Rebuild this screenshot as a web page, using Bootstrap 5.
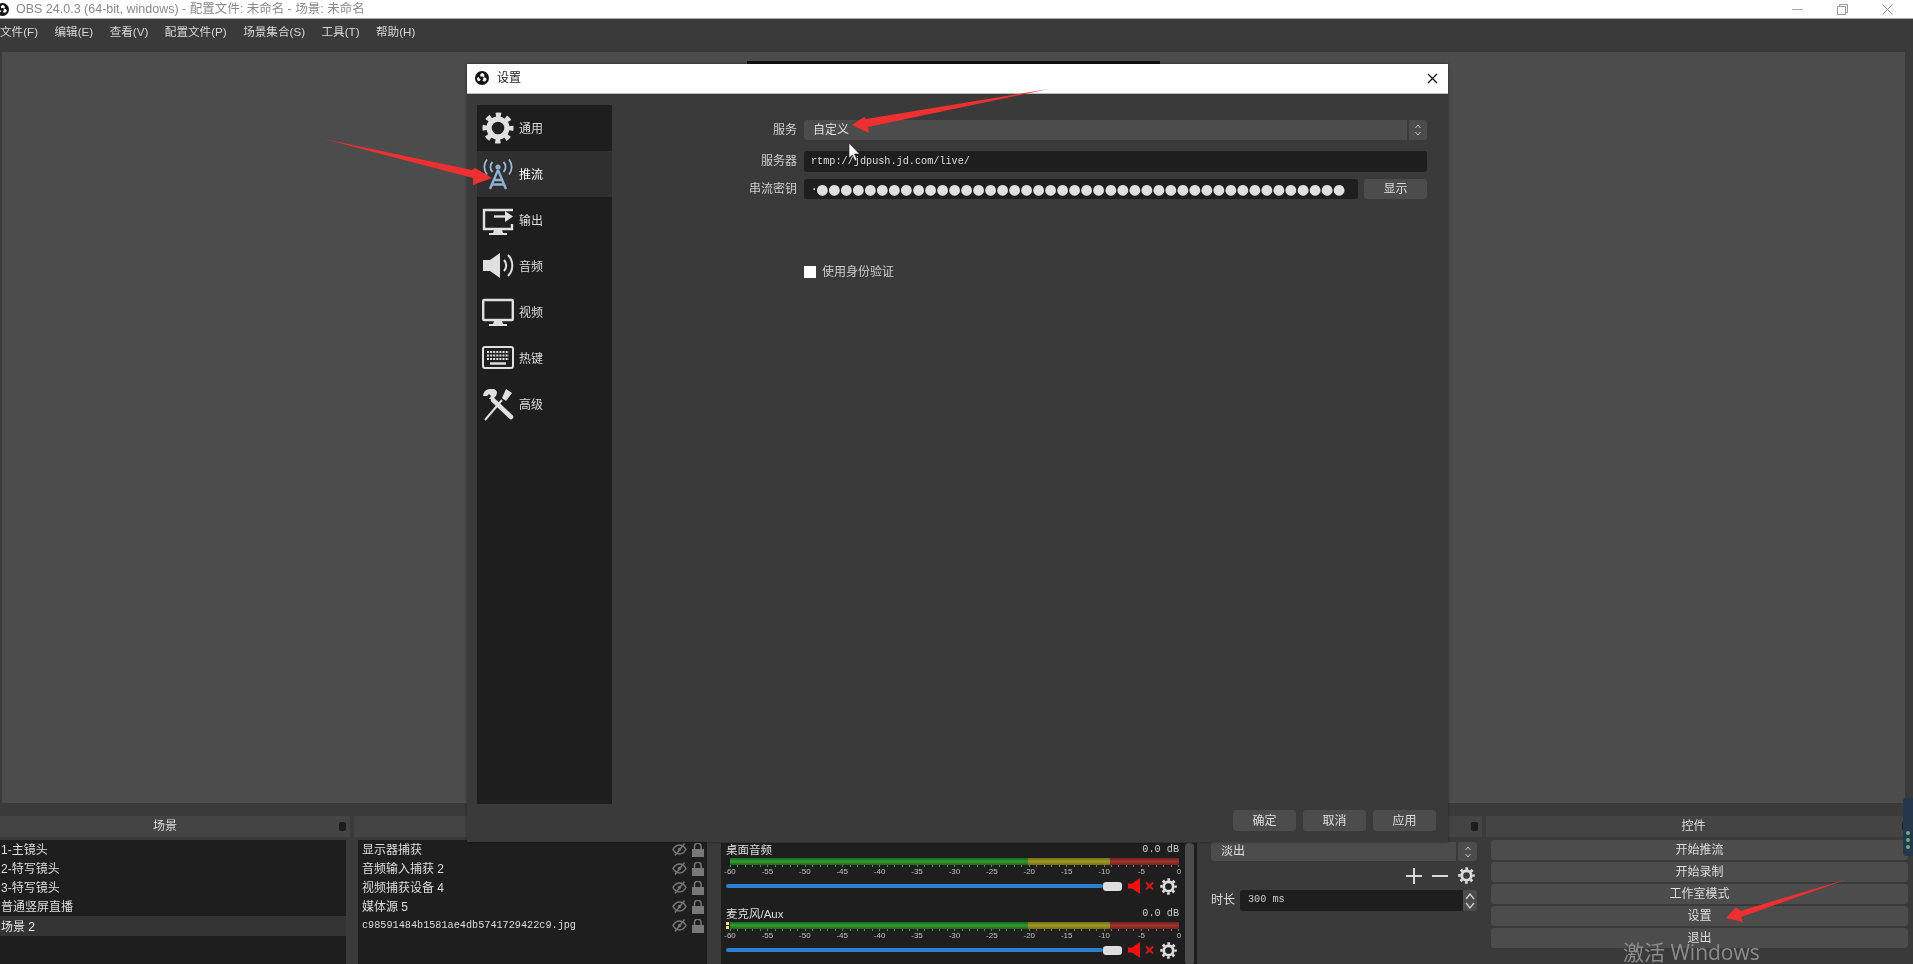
<!doctype html>
<html lang="zh">
<head>
<meta charset="utf-8">
<title>OBS</title>
<link rel="stylesheet" href="https://cdn.jsdelivr.net/npm/bootstrap@5.3.0/dist/css/bootstrap.min.css">
<style>
html,body{height:100%;margin:0;overflow:hidden;background:#3a3a3a}
body{font-family:"Liberation Sans","Noto Sans CJK SC",sans-serif;font-size:12px;color:#dedede;line-height:1.2}
.appfilm{width:1913px;height:964px;position:relative;overflow:hidden;background:#3a3a3a;filter:blur(.55px)}
.wintitle{height:19px;background:#fff;color:#8a8a8a;font-size:12.5px;border-bottom:1px solid #aaa;padding-top:1px}
.winlogo{margin-left:-4px;margin-right:7px}
.winctl{gap:34px;padding-right:20px}
.menustrip{height:33px;gap:16.500px;padding:0 0 7px 0;font-size:11.600px;color:#d8d8d8}
.previewpane{height:751px;margin:0 8px 0 2px;background:#4c4c4c;padding-top:9px}
.previewstrip{width:413px;height:3px;margin-left:745px;background:#111}
.dockrow{height:149px;padding-top:12px}
.docktitle{height:21px;margin-top:1px;background:#444;color:#dedede;position:relative}
.floatmark{position:absolute;right:4px;top:6px;width:7px;height:9px;border-radius:2px;background:#1c1c1c}
.dockscene{width:350px;margin-right:4px}
.dockscene .docktitle{padding-right:20px}
.docksource{width:358px;margin-right:4px}
.dockmixer{width:481px;margin-right:6px}
.docktrans{width:279px;margin-right:4px}
.dockctl{width:427px}
.dockctl .docktitle{padding-right:12px}
.listpane{background:#1e1e1e;margin-top:3px;height:125px;border-radius:0}
.scenelist{width:346px}
.sourcelist{width:349px;margin-left:4px}
.entry{height:19px;padding:2px 1px 0;background:transparent;border:0;color:#dedede;border-radius:0;white-space:nowrap}
.sourcelist .entry{padding:2px 2px 0 4px;gap:0}
.entry.picked{background:#333;height:20px;color:#e8e8e8}
.entryicons{gap:5px;padding-right:1px;margin-top:-2px}
.monotext{font-family:"Liberation Mono","Noto Sans CJK SC",monospace;font-size:10.200px}
.mixerpane{width:476px;margin-left:5px;height:122px;margin-top:6px;background:#1e1e1e;padding:0 3px 0 5px;position:relative}
.mixerbar{position:absolute;right:3px;top:0;width:9px;height:122px;background:#4c4c4c;border-radius:4px}
.channel{width:453px;height:63px}
.channel+.channel{padding-top:1px}
.chanhead{height:15px;font-size:11.500px}
.decibel{font-family:"Liberation Mono",monospace;font-size:10.200px;color:#cfcfcf}
.meterbar{height:7px;margin-left:4px;position:relative}
.mgreen{width:298px;background:linear-gradient(#1d651d,#2f9b2f 50%,#1d651d)}
.myellow{width:82px;background:linear-gradient(#6d6d1c,#a09a28 50%,#6d6d1c)}
.mred{width:69px;background:linear-gradient(#6f231c,#a0352a 50%,#6f231c)}
.peakmark{position:absolute;left:-4px;top:0;width:3px;height:7px;background:repeating-linear-gradient(#f2e27a 0 3px,#222 3px 4px)}
.tickstrip{height:2px;margin-left:4px;background:repeating-linear-gradient(90deg,#7a7a7a 0 1px,transparent 1px 7.470px)}
.scaletext{height:9px;margin-left:4px;font-size:8px;color:#c0c0c0;line-height:9px}
.scaletext span{width:0;display:flex;justify-content:center}
.sliderrow{height:20px}
.slidertrack{width:377px;height:4px;background:#2f7fd0;border-radius:2px}
.sliderknob{width:19px;height:9px;background:#dedede;border-radius:3px;margin-right:6px}
.obsbtn{--bs-btn-bg:#4c4c4c;--bs-btn-color:#dedede;--bs-btn-border-color:#4c4c4c;--bs-btn-hover-bg:#4c4c4c;--bs-btn-hover-color:#dedede;--bs-btn-hover-border-color:#4c4c4c;--bs-btn-padding-y:0;--bs-btn-padding-x:0;--bs-btn-font-size:12px;--bs-btn-border-radius:3px;--bs-btn-line-height:1;display:flex;align-items:center;justify-content:center}
.ctlstack{width:417px;margin:3px 0 0 5px;gap:2px}
.ctlstack .obsbtn{height:20px}
.transblock{padding:5px 5px 0 8px;height:125px}
.comboface{width:245px;height:19px;background:#4c4c4c;border-radius:3px 0 0 3px;padding-left:10px}
.combostep{width:19px;height:19px;margin-left:2px;background:#4c4c4c;border-radius:3px}
.transtools{gap:10px;margin:4px 2px 0 0;height:21px}
.spanlabel{width:29px;color:#dedede}
.spanfield{width:223px;height:21px;background:#1e1e1e;border-radius:3px 0 0 3px;padding-left:8px;color:#cfcfcf}
.spansteps{width:14px;height:21px;background:#4c4c4c;border-radius:0 3px 3px 0}
.durationrow{margin-top:4px}
.dialogwin{position:absolute;left:467px;top:64px;width:981px;height:778px;background:#3a3a3a;box-shadow:0 0 3px rgba(0,0,0,.45)}
.dialoghead{height:30px;background:#fff;color:#222;padding:0 10px 0 8px;border-bottom:1px solid #bbb}
.dialogmain{height:710px;padding:11px 0 0 10px}
.navrail{width:135px;height:699px;background:#1e1e1e;--bs-list-group-bg:transparent;--bs-list-group-border-width:0;--bs-list-group-color:#dedede;--bs-list-group-item-padding-x:5px;--bs-list-group-item-padding-y:0;border-radius:0}
.navrail .list-group-item{height:46px;gap:5px;display:flex;align-items:center;padding-right:0}
.navrail .list-group-item span{padding-top:2px}
.navrail .list-group-item.active{background:#2f2f2f;color:#fff;border:0;margin-top:0}
.navglyph{width:32px;height:34px;flex:none}
.formpane{width:836px;padding:15px 21px 0 0}
.formline{gap:7px}
.formlabel{width:185px;text-align:right;color:#d0d0d0}
.fieldslot{width:623px}
.selectface{height:20px;background:#4c4c4c;border-radius:3px;padding:0 0 0 9px;color:#dedede}
.selectstep{width:20px;height:20px;border-left:2px solid #3a3a3a}
.inputdark{background:#1e1e1e;border:0;border-radius:3px;color:#dedede;padding:0 7px}
.serverline{margin-top:11px;height:21px}
.serverline .inputdark{height:21px;line-height:21px}
.keyline{margin-top:7px;height:20px}
.keyface{width:554px;height:20px;background:#1e1e1e;border-radius:3px;overflow:hidden;white-space:nowrap;padding-left:8px;font-family:"DejaVu Sans",sans-serif;font-size:14px;letter-spacing:-.2px;line-height:20px;color:#e0e0e0}
.showbtn{width:63px;height:20px;margin-left:6px}
.authline{margin:61px 0 0 192px}
.authline .form-check-input{width:12px;height:12px;margin:0 6px 0 0;background:#fff;border:0;border-radius:0;float:none}
.authline .form-check-label{color:#cfcfcf}
.dialogfoot{gap:7px;padding:6px 12px 0 0}
.dialogfoot .obsbtn{width:63px;height:21px}
.pointerlayer{position:absolute;left:0;top:0;width:1913px;height:964px;pointer-events:none;z-index:5}
.watermark{position:absolute;left:1623px;top:940px;font-family:"Open Sans","Noto Sans CJK SC",sans-serif;font-size:21px;line-height:24px;color:#8c8c8c;white-space:nowrap;z-index:4}
.sidewidget{position:absolute;left:1903px;top:798px;width:10px;height:58px;background:#25384a;border-radius:3px 0 0 3px;padding:33px 0 0 3px;gap:3px}
.sidewidget i{width:4px;height:4px;border-radius:50%;background:#6fae8a}
</style>
</head>
<body>
<svg width="0" height="0" class="d-block position-absolute">
  <defs>
    <symbol id="gearglyph" viewBox="0 0 34 34">
      <circle cx="17" cy="17" r="9.500" fill="none" stroke="currentColor" stroke-width="5.600"/>
      <circle cx="17" cy="17" r="14" fill="none" stroke="currentColor" stroke-width="5" stroke-dasharray="5.500 5.496" stroke-dashoffset="2.750"/>
    </symbol>
    <symbol id="obslogo" viewBox="0 0 20 20">
      <circle cx="10" cy="10" r="10" fill="#111"/>
      <path d="M10 3a3.600 3.600 0 0 1 2.600 6 4 4 0 0 0-4.400-.8A3.600 3.600 0 0 1 10 3z" fill="#fff"/>
      <path d="M16.600 11.400a3.600 3.600 0 0 1-6 2.600 4 4 0 0 0 1-4.400 3.600 3.600 0 0 1 5 1.800z" fill="#fff"/>
      <path d="M4.600 14.600a3.600 3.600 0 0 1 .6-6.400 4 4 0 0 0 3 3.600 3.600 3.600 0 0 1-3.600 2.800z" fill="#fff"/>
    </symbol>
    <symbol id="eyeoff" viewBox="0 0 15 13">
      <path d="M1 6.500C3 3 5 2 7.500 2S12 3 14 6.500C12 10 10 11 7.500 11S3 10 1 6.500z" fill="none" stroke="#787878" stroke-width="1.500"/>
      <circle cx="7.500" cy="6.500" r="1.700" fill="#787878"/>
      <path d="M3 12.500 12.500.5" stroke="#787878" stroke-width="1.400"/>
    </symbol>
    <symbol id="lockopen" viewBox="0 0 12 14">
      <rect x="0" y="6" width="12" height="8" fill="#787878"/>
      <path d="M2.500 6V3.600a3.300 3.300 0 0 1 6.600 0V6" fill="none" stroke="#787878" stroke-width="1.500"/>
    </symbol>
    <symbol id="mutedspeaker" viewBox="0 0 28 16">
      <path d="M0 5.500h4L12 0v16L4 10.500H0z" fill="#f01010"/>
      <path d="M18 4.500l7 7m0-7-7 7" stroke="#d81818" stroke-width="2"/>
    </symbol>
    <symbol id="stepper" viewBox="0 0 10 20">
      <path d="M2.500 8 5 5l2.500 3M2.500 12 5 15l2.500-3" fill="none" stroke="#c4c4c4" stroke-width="1"/>
    </symbol>
  </defs>
</svg>

<div class="appfilm d-flex flex-column">
  <div class="wintitle d-flex align-items-center justify-content-between">
    <div class="d-flex align-items-center">
      <svg class="winlogo" width="13" height="13"><use href="#obslogo"/></svg>
      <span>OBS 24.0.3 (64-bit, windows) - 配置文件: 未命名 - 场景: 未命名</span>
    </div>
    <div class="winctl d-flex align-items-center">
      <svg width="11" height="11" viewBox="0 0 11 11"><path d="M0 5.500h11" stroke="#a8a8a8"/></svg>
      <svg width="11" height="11" viewBox="0 0 11 11"><path d="M.5 2.500h8v8h-8zM2.500 2.500V.5h8v8H8.500" fill="none" stroke="#999"/></svg>
      <svg width="11" height="11" viewBox="0 0 11 11"><path d="M.5.5l10 10m0-10-10 10" stroke="#888"/></svg>
    </div>
  </div>
  <div class="menustrip d-flex align-items-center">
    <span>文件(F)</span><span>编辑(E)</span><span>查看(V)</span><span>配置文件(P)</span><span>场景集合(S)</span><span>工具(T)</span><span>帮助(H)</span>
  </div>
  <div class="previewpane"><div class="previewstrip"></div></div>
  <div class="dockrow d-flex">
    <section class="dockscene">
      <div class="docktitle d-flex align-items-center justify-content-center"><span>场景</span><i class="floatmark"></i></div>
      <div class="listpane scenelist list-group">
        <div class="entry d-flex align-items-center">1-主镜头</div>
        <div class="entry d-flex align-items-center">2-特写镜头</div>
        <div class="entry d-flex align-items-center">3-特写镜头</div>
        <div class="entry d-flex align-items-center">普通竖屏直播</div>
        <div class="entry picked d-flex align-items-center">场景 2</div>
      </div>
    </section>
    <section class="docksource">
      <div class="docktitle"></div>
      <div class="listpane sourcelist list-group">
        <div class="entry d-flex align-items-center justify-content-between"><span>显示器捕获</span><span class="entryicons d-flex"><svg width="15" height="13"><use href="#eyeoff"/></svg><svg width="12" height="14"><use href="#lockopen"/></svg></span></div>
        <div class="entry d-flex align-items-center justify-content-between"><span>音频输入捕获 2</span><span class="entryicons d-flex"><svg width="15" height="13"><use href="#eyeoff"/></svg><svg width="12" height="14"><use href="#lockopen"/></svg></span></div>
        <div class="entry d-flex align-items-center justify-content-between"><span>视频捕获设备 4</span><span class="entryicons d-flex"><svg width="15" height="13"><use href="#eyeoff"/></svg><svg width="12" height="14"><use href="#lockopen"/></svg></span></div>
        <div class="entry d-flex align-items-center justify-content-between"><span>媒体源 5</span><span class="entryicons d-flex"><svg width="15" height="13"><use href="#eyeoff"/></svg><svg width="12" height="14"><use href="#lockopen"/></svg></span></div>
        <div class="entry d-flex align-items-center justify-content-between"><span class="monotext">c98591484b1581ae4db5741729422c9.jpg</span><span class="entryicons d-flex"><svg width="15" height="13"><use href="#eyeoff"/></svg><svg width="12" height="14"><use href="#lockopen"/></svg></span></div>
      </div>
    </section>
    <section class="dockmixer">
      <div class="docktitle"></div>
      <div class="mixerpane">
        <div class="channel">
          <div class="chanhead d-flex align-items-center justify-content-between"><span>桌面音频</span><span class="decibel">0.0 dB</span></div>
          <div class="meterbar d-flex"><i class="mgreen"></i><i class="myellow"></i><i class="mred"></i></div>
          <div class="tickstrip"></div>
          <div class="scaletext d-flex justify-content-between"><span>-60</span><span>-55</span><span>-50</span><span>-45</span><span>-40</span><span>-35</span><span>-30</span><span>-25</span><span>-20</span><span>-15</span><span>-10</span><span>-5</span><span>0</span></div>
          <div class="sliderrow d-flex align-items-center"><i class="slidertrack"></i><i class="sliderknob"></i><svg width="28" height="16"><use href="#mutedspeaker"/></svg><svg class="ms-1" width="17" height="17" color="#dcdcdc"><use href="#gearglyph"/></svg></div>
        </div>
        <div class="channel">
          <div class="chanhead d-flex align-items-center justify-content-between"><span>麦克风/Aux</span><span class="decibel">0.0 dB</span></div>
          <div class="meterbar d-flex"><i class="peakmark"></i><i class="mgreen"></i><i class="myellow"></i><i class="mred"></i></div>
          <div class="tickstrip"></div>
          <div class="scaletext d-flex justify-content-between"><span>-60</span><span>-55</span><span>-50</span><span>-45</span><span>-40</span><span>-35</span><span>-30</span><span>-25</span><span>-20</span><span>-15</span><span>-10</span><span>-5</span><span>0</span></div>
          <div class="sliderrow d-flex align-items-center"><i class="slidertrack"></i><i class="sliderknob"></i><svg width="28" height="16"><use href="#mutedspeaker"/></svg><svg class="ms-1" width="17" height="17" color="#dcdcdc"><use href="#gearglyph"/></svg></div>
        </div>
        <div class="mixerbar"></div>
      </div>
    </section>
    <section class="docktrans">
      <div class="docktitle"><i class="floatmark"></i></div>
      <div class="transblock">
        <div class="d-flex">
          <div class="comboface d-flex align-items-center">淡出</div>
          <div class="combostep d-flex justify-content-center"><svg width="10" height="20"><use href="#stepper"/></svg></div>
        </div>
        <div class="transtools d-flex justify-content-end align-items-center">
          <svg width="16" height="16" viewBox="0 0 16 16"><path d="M8 0v16M0 8h16" stroke="#d8d8d8" stroke-width="2"/></svg>
          <svg width="16" height="16" viewBox="0 0 16 16"><path d="M0 8h16" stroke="#d8d8d8" stroke-width="2"/></svg>
          <svg width="17" height="17" color="#dcdcdc"><use href="#gearglyph"/></svg>
        </div>
        <div class="durationrow d-flex align-items-center">
          <span class="spanlabel">时长</span>
          <div class="spanfield monotext d-flex align-items-center">300 ms</div>
          <div class="spansteps d-flex justify-content-center align-items-center"><svg width="12" height="20" viewBox="0 0 10 20"><path d="M1 8l4-5 4 5M1 12l4 5 4-5" fill="none" stroke="#d0d0d0" stroke-width="1.300"/></svg></div>
        </div>
      </div>
    </section>
    <section class="dockctl">
      <div class="docktitle d-flex align-items-center justify-content-center"><span>控件</span><i class="floatmark"></i></div>
      <div class="ctlstack d-flex flex-column">
        <button class="btn obsbtn" type="button">开始推流</button>
        <button class="btn obsbtn" type="button">开始录制</button>
        <button class="btn obsbtn" type="button">工作室模式</button>
        <button class="btn obsbtn" type="button">设置</button>
        <button class="btn obsbtn" type="button">退出</button>
      </div>
    </section>
  </div>

  <div class="dialogwin d-flex flex-column">
    <div class="dialoghead d-flex align-items-center justify-content-between">
      <div class="d-flex align-items-center gap-2"><svg width="14" height="14"><use href="#obslogo"/></svg><span>设置</span></div>
      <svg width="11" height="11" viewBox="0 0 11 11"><path d="M1 1l9 9m0-9-9 9" stroke="#111" stroke-width="1.300"/></svg>
    </div>
    <div class="dialogmain d-flex">
      <div class="navrail list-group list-group-flush">
        <div class="list-group-item"><svg class="navglyph" color="#e0e0e0"><use href="#gearglyph"/></svg><span>通用</span></div>
        <div class="list-group-item active">
          <svg class="navglyph" viewBox="0 0 32 34" fill="none">
            <circle cx="16" cy="10" r="2.600" fill="#8fb0d0"/>
            <path d="M10.500 5a7 7 0 0 0 0 10M21.500 5a7 7 0 0 1 0 10M5 2.500a12 12 0 0 0 0 15M27 2.500a12 12 0 0 1 0 15" stroke="#9cb8d4" stroke-width="1.800"/>
            <path d="M16 13 8 32M16 13l8 19M12 23h8M10.500 27.500h11" stroke="#8fb0d0" stroke-width="2.400"/>
          </svg><span>推流</span></div>
        <div class="list-group-item">
          <svg class="navglyph" viewBox="0 0 32 34" fill="none">
            <path d="M31 7H2v19h28v-5" stroke="#e0e0e0" stroke-width="2.400"/>
            <path d="M12 27h8l1 3h4v2H7v-2h4z" fill="#e0e0e0"/>
            <path d="M12 13.500h14" stroke="#e0e0e0" stroke-width="2.400"/><path d="M23 8l8 5.500-8 5.500z" fill="#e0e0e0"/>
          </svg><span>输出</span></div>
        <div class="list-group-item">
          <svg class="navglyph" viewBox="0 0 32 34" fill="none">
            <path d="M1 11h7l10-7v25l-10-7H1z" fill="#e0e0e0"/>
            <path d="M22 11a8 8 0 0 1 0 11M26 6a15 15 0 0 1 0 21" stroke="#e0e0e0" stroke-width="2"/>
          </svg><span>音频</span></div>
        <div class="list-group-item">
          <svg class="navglyph" viewBox="0 0 32 34" fill="none">
            <rect x="1.200" y="5" width="29.600" height="20" rx="1" stroke="#e0e0e0" stroke-width="2.400"/>
            <path d="M12 26h8l1 3h4v2H7v-2h4z" fill="#e0e0e0"/>
          </svg><span>视频</span></div>
        <div class="list-group-item">
          <svg class="navglyph" viewBox="0 0 32 34" fill="none">
            <rect x="1" y="6" width="30" height="21" rx="2" stroke="#e0e0e0" stroke-width="2"/>
            <path d="M5 11h22M5 14.500h22M5 18h22" stroke="#e0e0e0" stroke-width="2.200" stroke-dasharray="2 1.100"/>
            <path d="M8 22.500h16" stroke="#e0e0e0" stroke-width="2.400"/>
          </svg><span>热键</span></div>
        <div class="list-group-item">
          <svg class="navglyph" viewBox="0 0 32 34" fill="none">
            <path d="M3 33 20 13" stroke="#e0e0e0" stroke-width="2"/>
            <path d="M24 2l6 4-6 8-4-3z" fill="#e0e0e0"/>
            <path d="M11 13 29 30" stroke="#e0e0e0" stroke-width="4.500" stroke-linecap="round"/>
            <path d="M8 2a7 7 0 0 0-7 7l4 0 2-2 2 2-2 3a7 7 0 0 0 8-6c0-2-1-3-3-4z" fill="#e0e0e0"/>
          </svg><span>高级</span></div>
      </div>
      <form class="formpane">
        <div class="formline d-flex align-items-center">
          <label class="formlabel">服务</label>
          <div class="fieldslot selectface d-flex align-items-center justify-content-between"><span>自定义</span><span class="selectstep d-flex justify-content-center"><svg width="10" height="20"><use href="#stepper"/></svg></span></div>
        </div>
        <div class="formline serverline d-flex align-items-center">
          <label class="formlabel">服务器</label>
          <div class="fieldslot"><div class="inputdark monotext">rtmp://jdpush.jd.com/live/</div></div>
        </div>
        <div class="formline keyline d-flex align-items-center">
          <label class="formlabel">串流密钥</label>
          <div class="fieldslot d-flex">
            <div class="keyface">·●●●●●●●●●●●●●●●●●●●●●●●●●●●●●●●●●●●●●●●●●●●●</div>
            <button class="btn obsbtn showbtn" type="button">显示</button>
          </div>
        </div>
        <div class="authline form-check d-flex align-items-center ps-0">
          <input class="form-check-input" type="checkbox" id="authcheck">
          <label class="form-check-label" for="authcheck">使用身份验证</label>
        </div>
      </form>
    </div>
    <div class="dialogfoot d-flex justify-content-end">
      <button class="btn obsbtn" type="button">确定</button>
      <button class="btn obsbtn" type="button">取消</button>
      <button class="btn obsbtn" type="button">应用</button>
    </div>
  </div>

  <div class="sidewidget d-flex flex-column"><i></i><i></i><i></i></div>
  <div class="watermark">激活 Windows</div>
  <svg class="pointerlayer" viewBox="0 0 1913 964">
    <path d="M324 139 472 170 475 168 492 178 473 185 473 178z" fill="#f03030"/>
    <path d="M1049 89 866 119 864 117 852 125 869 133 868 127z" fill="#f03030"/>
    <path d="M1848 879 1740 911 1736 907 1726 918 1743 922 1741 917z" fill="#f03030"/>
    <path d="M849 143v15l3.500-3 2.500 6 2-1-2.500-6h5z" fill="#fff" stroke="#222" stroke-width=".6"/>
  </svg>
</div>
<script src="https://cdn.jsdelivr.net/npm/bootstrap@5.3.0/dist/js/bootstrap.bundle.min.js"></script>
</body>
</html>
